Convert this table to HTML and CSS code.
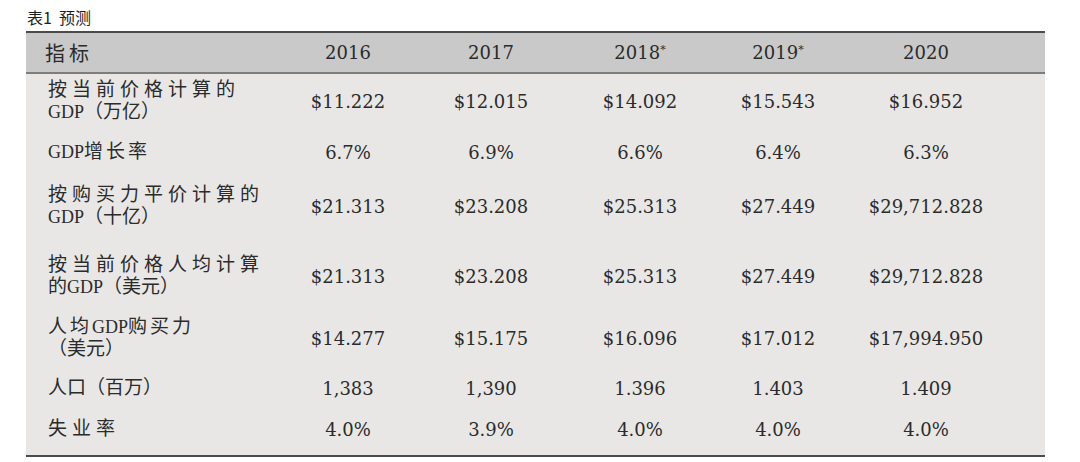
FILE: index.html
```html
<!DOCTYPE html>
<html lang="zh">
<head>
<meta charset="utf-8">
<title>表1 预测</title>
<link rel="stylesheet" href="styles.css">
</head>
<body>
<div class="page">
  <div class="caption">表1&nbsp;&nbsp;预测</div>
  <table class="forecast">
    <colgroup>
      <col class="c-label"><col class="c1"><col class="c2"><col class="c3"><col class="c4"><col class="c5">
    </colgroup>
    <thead>
      <tr>
        <th class="label">指标</th>
        <th>2016</th>
        <th>2017</th>
        <th>2018<sup>*</sup></th>
        <th>2019<sup>*</sup></th>
        <th class="last">2020</th>
      </tr>
    </thead>
    <tbody>
      <tr class="r1">
        <td class="label">按当前价格计算的<br><span class="lat">GDP</span><span class="tight">（万亿）</span></td>
        <td>$11.222</td><td>$12.015</td><td>$14.092</td><td>$15.543</td><td class="last">$16.952</td>
      </tr>
      <tr class="r2">
        <td class="label narrow"><span class="lat">GDP</span>增长率</td>
        <td>6.7%</td><td>6.9%</td><td>6.6%</td><td>6.4%</td><td class="last">6.3%</td>
      </tr>
      <tr class="r3">
        <td class="label">按购买力平价计算的<br><span class="lat">GDP</span><span class="tight">（十亿）</span></td>
        <td>$21.313</td><td>$23.208</td><td>$25.313</td><td>$27.449</td><td class="last">$29,712.828</td>
      </tr>
      <tr class="r4">
        <td class="label">按当前价格人均计算<br><span class="tight">的</span><span class="lat">GDP</span><span class="tight">（美元）</span></td>
        <td>$21.313</td><td>$23.208</td><td>$25.313</td><td>$27.449</td><td class="last">$29,712.828</td>
      </tr>
      <tr class="r5">
        <td class="label narrow">人均<span class="lat">GDP</span>购买力<br><span class="tight">（美元）</span></td>
        <td>$14.277</td><td>$15.175</td><td>$16.096</td><td>$17.012</td><td class="last">$17,994.950</td>
      </tr>
      <tr class="r6">
        <td class="label"><span class="tight">人口（百万）</span></td>
        <td>1,383</td><td>1,390</td><td>1.396</td><td>1.403</td><td class="last">1.409</td>
      </tr>
      <tr class="r7">
        <td class="label">失业率</td>
        <td>4.0%</td><td>3.9%</td><td>4.0%</td><td>4.0%</td><td class="last">4.0%</td>
      </tr>
    </tbody>
  </table>
</div>
</body>
</html>
```

FILE: styles.css
```css
html, body {
  margin: 0;
  padding: 0;
  background: #ffffff;
}

.page {
  padding: 0 35px 0 26px;
  color: #2b2b2b;
}

.caption {
  height: 31px;
  box-sizing: border-box;
  padding: 7px 0 0 1px;
  font-family: "Noto Sans CJK SC", "Noto Sans", sans-serif;
  font-size: 16px;
  line-height: 21px;
  color: #1e1e1e;
}

.forecast {
  width: 1019px;
  table-layout: fixed;
  border-collapse: separate;
  border-spacing: 0;
  font-family: "DejaVu Serif", "Noto Sans CJK SC", serif;
  font-size: 18px;
  color: #2b2b2b;
}

.c-label { width: 250px; }
.c1 { width: 144px; }
.c2 { width: 142px; }
.c3 { width: 156px; }
.c4 { width: 120px; }
.c5 { width: 207px; }

.forecast th,
.forecast td {
  padding: 0;
  text-align: center;
  vertical-align: middle;
  font-weight: normal;
  white-space: nowrap;
}

.forecast .last {
  padding-right: 31px;
}

.forecast thead tr { height: 43px; }

.forecast thead th {
  background: #c9c9c9;
  border-top: 2px solid #4b4b4b;
  border-bottom: 2px solid #7d7d7d;
  line-height: 22px;
}

.forecast thead th.label {
  text-align: left;
  padding-left: 19px;
  font-family: "Noto Sans CJK SC", serif;
  font-size: 20px;
  letter-spacing: 4px;
}

.forecast sup {
  font-size: 11px;
  vertical-align: 6px;
  line-height: 0;
}

.forecast tbody td {
  background: #e8e7e6;
}

.forecast td.label {
  text-align: left;
  padding-left: 22px;
  font-family: "Liberation Serif", "Noto Sans CJK SC", serif;
  font-size: 19px;
  line-height: 22px;
  letter-spacing: 5px;
}

.forecast td.label.narrow {
  letter-spacing: 3px;
}

.forecast .tight {
  letter-spacing: 0;
}

.forecast .lat {
  letter-spacing: 0;
  font-size: 18px;
}

.r1 { height: 54px; }
.r2 { height: 48px; }
.r3 { height: 60px; }
.r4 { height: 80px; }
.r5 { height: 44px; }
.r6 { height: 56px; }
.r7 { height: 41px; }

.forecast .r7 td {
  padding-bottom: 13px;
  border-bottom: 2px solid #4b4b4b;
}
```
